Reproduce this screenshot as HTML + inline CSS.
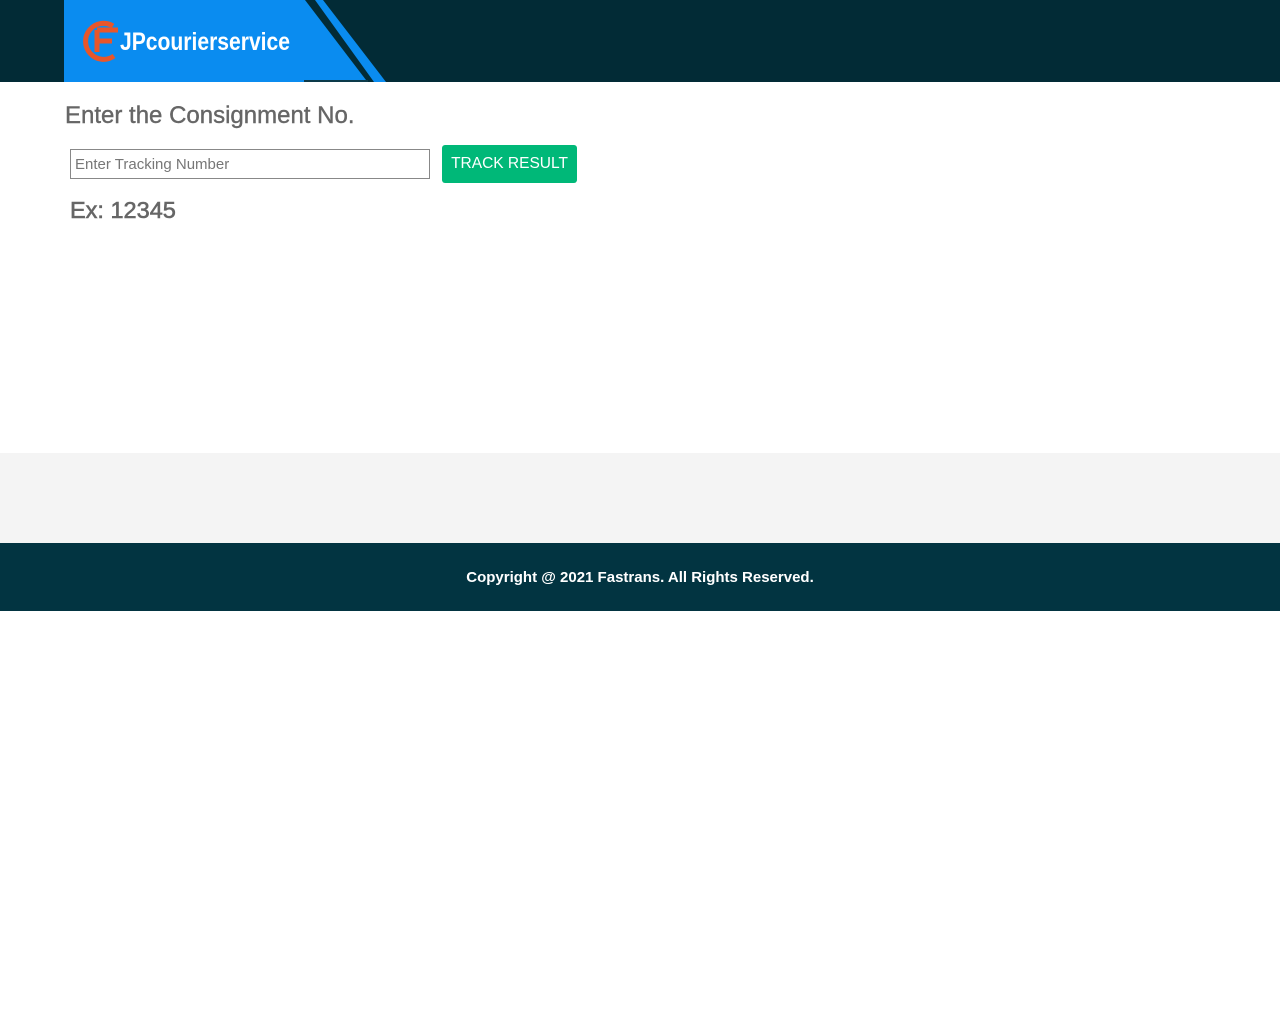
<!DOCTYPE html>
<html><head><meta charset="utf-8">
<style>
*{margin:0;padding:0;box-sizing:border-box}
body{width:1280px;height:1024px;background:#fff;font-family:"Liberation Sans",sans-serif;position:relative;overflow:hidden}
.hdr{position:absolute;left:0;top:0;width:1280px;height:82px;background:#022b36}
.logo{position:absolute;left:0;top:0}
h2{position:absolute;left:65px;top:102px;font-size:24px;font-weight:normal;color:#666;-webkit-text-stroke:0.4px #666}
input{position:absolute;left:70px;top:149px;width:360px;height:30px;border:1px solid #888;font-family:"Liberation Sans",sans-serif;font-size:15px;padding:0 4px;color:#777}
input::placeholder{color:#777}
.btn{position:absolute;left:442px;top:145px;width:135px;height:38px;background:#00b878;border-radius:3px;color:#fff;font-size:15.5px;line-height:38px;text-align:center}
.ex{position:absolute;left:70px;top:197px;font-size:23.5px;color:#666;-webkit-text-stroke:0.6px #666}
.gray{position:absolute;left:0;top:453px;width:1280px;height:90px;background:#f4f4f4}
.foot{position:absolute;left:0;top:543px;width:1280px;height:68px;background:#023441;color:#fff;font-size:15px;font-weight:bold;text-align:center;line-height:70px}
</style></head><body>
<div class="hdr"></div>
<svg class="logo" width="400" height="84" viewBox="0 0 400 84">
<polygon points="64,0 305,0 366,80 64,80" fill="#0a8cf0"/>
<polygon points="315,0 323,0 386,82 374,82" fill="#0a8cf0"/>
<rect x="64" y="80" width="240" height="2" fill="#0a8cf0"/>
<rect x="304" y="80" width="64" height="2" fill="#0c3a4a"/>
<path d="M113,26 A18,18 0 1 0 114,56" fill="none" stroke="#e8562a" stroke-width="5"/>
<path d="M97,30 L118,30 M97,30 L97,52 M97,41 L112,41" fill="none" stroke="#e8562a" stroke-width="5"/>
<text x="120" y="50" font-family="Liberation Sans,sans-serif" font-weight="bold" font-size="25" fill="#fff" textLength="170" lengthAdjust="spacingAndGlyphs">JPcourierservice</text>
</svg>
<h2>Enter the Consignment No.</h2>
<input type="text" placeholder="Enter Tracking Number">
<div class="btn">TRACK RESULT</div>
<div class="ex">Ex: 12345</div>
<div class="gray"></div>
<div class="foot">Copyright @ 2021 Fastrans. All Rights Reserved.</div>
</body></html>
